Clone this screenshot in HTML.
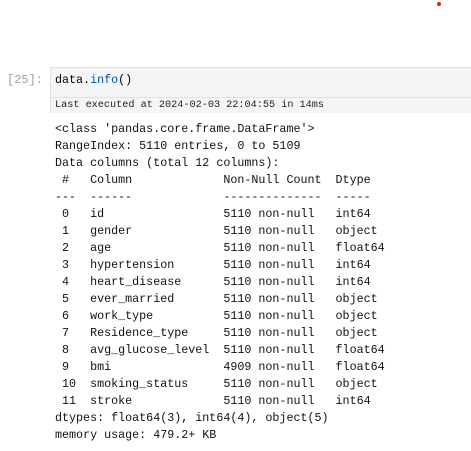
<!DOCTYPE html>
<html><head><style>
body{margin:0;width:471px;height:451px;background:#fff;position:relative;overflow:hidden;font-family:"Liberation Mono",monospace;}
.dot{position:absolute;left:437px;top:2px;width:4px;height:4px;border-radius:50%;background:#e02020;}
.prompt{position:absolute;left:7px;top:73px;font-size:12px;color:#9e9e9e;}
.cell{position:absolute;left:50px;top:67px;width:430px;height:46px;border:1px solid #e0e0e0;background:#f5f5f5;box-sizing:border-box;}
.code{position:absolute;left:55px;top:73px;font-size:11.7px;color:#000;}
.code .f{color:#0055aa;}
.exec{position:absolute;left:51px;top:97px;width:430px;height:16px;border-top:1px solid #e0e0e0;background:#f5f5f5;font-size:10.2px;color:#222;padding-left:4px;line-height:15px;box-sizing:border-box;}
pre{position:absolute;left:55px;top:121px;margin:0;font-family:"Liberation Mono",monospace;font-size:11.7px;line-height:17px;color:#111;}
</style></head><body>
<div class="dot"></div>
<div class="prompt">[25]:</div>
<div class="cell"></div>
<div class="code">data.<span class="f">info</span>()</div>
<div class="exec">Last executed at 2024-02-03 22:04:55 in 14ms</div>
<pre>&lt;class 'pandas.core.frame.DataFrame'&gt;
RangeIndex: 5110 entries, 0 to 5109
Data columns (total 12 columns):
 #   Column             Non-Null Count  Dtype  
---  ------             --------------  -----  
 0   id                 5110 non-null   int64  
 1   gender             5110 non-null   object 
 2   age                5110 non-null   float64
 3   hypertension       5110 non-null   int64  
 4   heart_disease      5110 non-null   int64  
 5   ever_married       5110 non-null   object 
 6   work_type          5110 non-null   object 
 7   Residence_type     5110 non-null   object 
 8   avg_glucose_level  5110 non-null   float64
 9   bmi                4909 non-null   float64
 10  smoking_status     5110 non-null   object 
 11  stroke             5110 non-null   int64  
dtypes: float64(3), int64(4), object(5)
memory usage: 479.2+ KB</pre>
</body></html>
